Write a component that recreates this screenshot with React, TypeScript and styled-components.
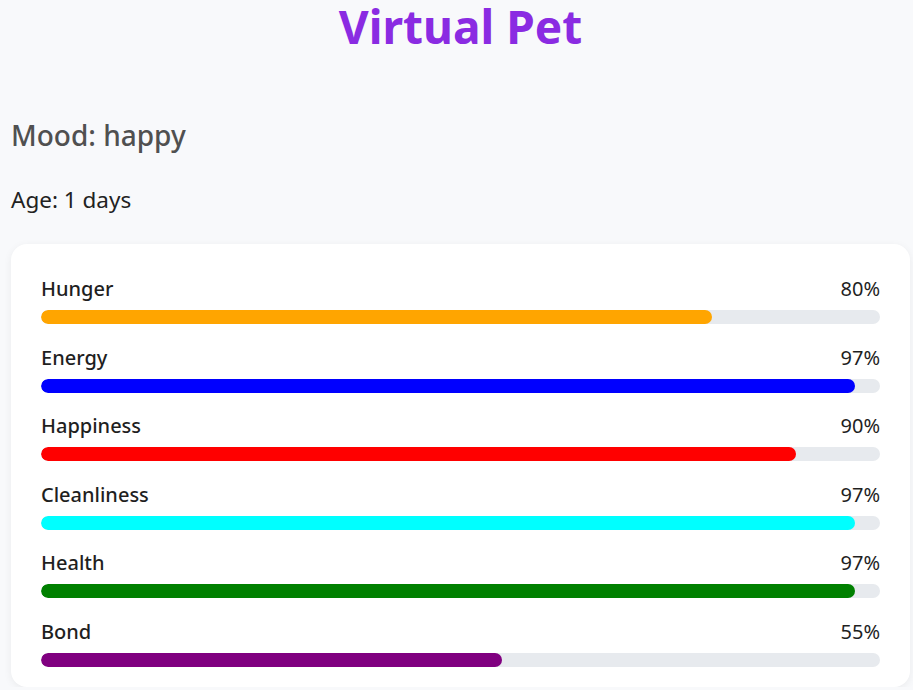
import React from "react";
import styled, { createGlobalStyle } from "styled-components";

const GlobalStyle = createGlobalStyle`
  html, body { margin: 0; padding: 0; background: #f8f9fb; }
  body { font-family: "Noto Sans", "Open Sans", sans-serif; }
`;

const Page = styled.div`
  padding: 0 3px 0 11px;
  display: flex;
  flex-direction: column;
`;

const Title = styled.h1`
  margin: 0;
  height: 52px;
  line-height: 52px;
  text-align: center;
  font-size: 46px;
  font-weight: 700;
  color: #8a2be2;
`;

const Mood = styled.h2`
  margin: 66px 0 0;
  font-size: 28px;
  line-height: 34px;
  font-weight: 500;
  color: #505050;
`;

const Age = styled.p`
  margin: 32px 0 0;
  font-size: 22.5px;
  line-height: 32px;
  color: #222;
`;

const Card = styled.div`
  margin-top: 28px;
  background: #fff;
  border-radius: 16px;
  box-shadow: 0 2px 8px rgba(0, 0, 0, 0.06);
  padding: 30px 30px 20px;
  display: flex;
  flex-direction: column;
  gap: 18.5px;
`;

const Stat = styled.div`
  display: flex;
  flex-direction: column;
  gap: 6px;
`;

const StatHeader = styled.div`
  display: flex;
  justify-content: space-between;
  align-items: center;
  font-size: 20px;
  line-height: 30px;
  color: #1f1f1f;
`;

const Label = styled.span`
  font-weight: 500;
`;

const Value = styled.span`
  font-weight: 400;
`;

const Track = styled.div`
  height: 14px;
  border-radius: 7px;
  background: #e7eaee;
  overflow: hidden;
`;

const Fill = styled.div<{ $color: string }>`
  height: 100%;
  border-radius: 7px;
  background: ${(p) => p.$color};
`;

const stats = [
  { name: "Hunger", value: 80, color: "#ffa500" },
  { name: "Energy", value: 97, color: "#0000ff" },
  { name: "Happiness", value: 90, color: "#ff0000" },
  { name: "Cleanliness", value: 97, color: "#00ffff" },
  { name: "Health", value: 97, color: "#008000" },
  { name: "Bond", value: 55, color: "#800080" },
];

export default function App() {
  return (
    <>
      <GlobalStyle />
      <Page>
        <Title>Virtual Pet</Title>
        <Mood>Mood: happy</Mood>
        <Age>Age: 1 days</Age>
        <Card>
          {stats.map((s) => (
            <Stat key={s.name}>
              <StatHeader>
                <Label>{s.name}</Label>
                <Value>{s.value}%</Value>
              </StatHeader>
              <Track>
                <Fill $color={s.color} style={{ width: `${s.value}%` }} />
              </Track>
            </Stat>
          ))}
        </Card>
      </Page>
    </>
  );
}
